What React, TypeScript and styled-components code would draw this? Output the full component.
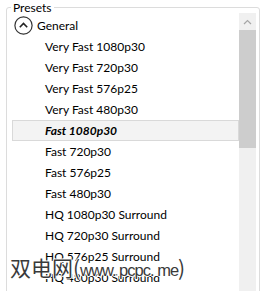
import styled, { createGlobalStyle } from "styled-components";

const GlobalStyle = createGlobalStyle`
  html, body {
    margin: 0;
    padding: 0;
    background: #ffffff;
    height: 291px;
    overflow: hidden;
  }
  body {
    font-family: "Lato", "Liberation Sans", sans-serif;
    font-size: 12px;
    color: #000000;
  }
`;

const Wrapper = styled.div`
  position: relative;
  width: 261px;
  height: 291px;
  padding-top: 1px;
  box-sizing: border-box;
  overflow: hidden;
`;

const Group = styled.fieldset`
  margin: 0 1px 0 6px;
  padding: 0 3px 0 0;
  border: 1px solid #dcdcdc;
  border-radius: 3px;
  height: 320px;
  box-sizing: border-box;
`;

const Legend = styled.legend`
  margin-left: 4px;
  padding: 0 2px;
  font-size: 12px;
  line-height: 13px;
`;

const Body = styled.div`
  display: flex;
  height: 100%;
`;

const List = styled.ul`
  flex: 1;
  margin: 0;
  padding: 1px 0 0 5px;
  list-style: none;
`;

const GroupHeader = styled.li`
  height: 21px;
  display: flex;
  align-items: center;
  gap: 4px;
  padding-left: 2px;
`;

const Row = styled.li<{ $selected?: boolean }>`
  height: 21px;
  box-sizing: border-box;
  display: flex;
  align-items: center;
  padding-left: 32px;
  border: 1px solid ${(p) => (p.$selected ? "#d9d9d9" : "transparent")};
  background: ${(p) => (p.$selected ? "#f3f3f3" : "transparent")};
  font-weight: ${(p) => (p.$selected ? 700 : 400)};
  font-style: ${(p) => (p.$selected ? "italic" : "normal")};
  white-space: nowrap;
`;

const Scrollbar = styled.div`
  width: 17px;
  margin-top: -1px;
  background: #f0f0f0;
  display: flex;
  flex-direction: column;
`;

const ArrowButton = styled.div`
  height: 17px;
  display: flex;
  align-items: center;
  justify-content: center;
`;

const Thumb = styled.div`
  height: 118px;
  background: #cdcdcd;
`;

const Watermark = styled.div`
  position: absolute;
  left: 10px;
  top: 252px;
  font-family: "Noto Sans CJK SC", sans-serif;
  font-size: 21px;
  color: #3a3a3a;
  white-space: nowrap;
  text-shadow: -1px 0 #fff, 1px 0 #fff, 0 -1px #fff, 0 1px #fff;
`;

const WatermarkLatin = styled.span`
  font-family: "Liberation Sans", sans-serif;
  font-size: 16.5px;
  letter-spacing: -1px;
`;

const presets = [
  "Very Fast 1080p30",
  "Very Fast 720p30",
  "Very Fast 576p25",
  "Very Fast 480p30",
  "Fast 1080p30",
  "Fast 720p30",
  "Fast 576p25",
  "Fast 480p30",
  "HQ 1080p30 Surround",
  "HQ 720p30 Surround",
  "HQ 576p25 Surround",
  "HQ 480p30 Surround",
];

const CollapseIcon = () => (
  <svg width="19" height="19" viewBox="0 0 19 19">
    <circle cx="9.5" cy="9.5" r="8.6" fill="none" stroke="#333" strokeWidth="1.2" />
    <path d="M5.8 11.2 L9.5 7.5 L13.2 11.2" fill="none" stroke="#222" strokeWidth="1.6" />
  </svg>
);

const App = () => {
  return (
    <Wrapper>
      <GlobalStyle />
      <Group>
        <Legend>Presets</Legend>
        <Body>
          <List>
            <GroupHeader>
              <CollapseIcon />
              General
            </GroupHeader>
            {presets.map((name) => (
              <Row key={name} $selected={name === "Fast 1080p30"}>
                {name}
              </Row>
            ))}
          </List>
          <Scrollbar>
            <ArrowButton>
              <svg width="9" height="6" viewBox="0 0 9 6">
                <path d="M1 5 L4.5 1.5 L8 5" fill="none" stroke="#a6a6a6" strokeWidth="1.2" />
              </svg>
            </ArrowButton>
            <Thumb />
          </Scrollbar>
        </Body>
      </Group>
      <Watermark>
        双电网(<WatermarkLatin>www. pcpc. me</WatermarkLatin>)
      </Watermark>
    </Wrapper>
  );
};

export default App;
